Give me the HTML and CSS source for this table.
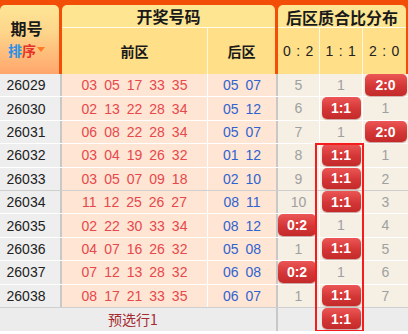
FILE: index.html
```html
<!DOCTYPE html>
<html lang="zh-CN">
<head>
<meta charset="utf-8">
<title>后区质合比分布</title>
<link rel="stylesheet" href="styles.css">
</head>
<body>
<div class="board">
  <div class="head">
    <div class="h-qh">
      <div class="qh-title">期号</div>
      <div class="sort"><span class="pai">排</span><span class="xu">序</span><span class="tri"></span></div>
    </div>
    <div class="h-group h-draw">
      <div class="h-top">开奖号码</div>
      <div class="h-sub">
        <div class="h-front">前区</div>
        <div class="h-back">后区</div>
      </div>
    </div>
    <div class="h-group h-dist">
      <div class="h-top">后区质合比分布</div>
      <div class="h-sub ratio-head">
        <div class="rh">0 : 2</div>
        <div class="rh">1 : 1</div>
        <div class="rh">2 : 0</div>
      </div>
    </div>
  </div>

  <div class="rows">
    <div class="row">
      <div class="c qh">26029</div>
      <div class="c fr"><span>03</span><span>05</span><span>17</span><span>33</span><span>35</span></div>
      <div class="c bk"><span>05</span><span>07</span></div>
      <div class="c r r1">5</div><div class="c r r2">1</div><div class="c r r3"><b class="badge">2:0</b></div>
    </div>
    <div class="row">
      <div class="c qh">26030</div>
      <div class="c fr"><span>02</span><span>13</span><span>22</span><span>28</span><span>34</span></div>
      <div class="c bk"><span>05</span><span>12</span></div>
      <div class="c r r1">6</div><div class="c r r2"><b class="badge">1:1</b></div><div class="c r r3">1</div>
    </div>
    <div class="row">
      <div class="c qh">26031</div>
      <div class="c fr"><span>06</span><span>08</span><span>22</span><span>28</span><span>34</span></div>
      <div class="c bk"><span>05</span><span>07</span></div>
      <div class="c r r1">7</div><div class="c r r2">1</div><div class="c r r3"><b class="badge">2:0</b></div>
    </div>
    <div class="row">
      <div class="c qh">26032</div>
      <div class="c fr"><span>03</span><span>04</span><span>19</span><span>26</span><span>32</span></div>
      <div class="c bk"><span>01</span><span>12</span></div>
      <div class="c r r1">8</div><div class="c r r2"><b class="badge">1:1</b></div><div class="c r r3">1</div>
    </div>
    <div class="row group-end">
      <div class="c qh">26033</div>
      <div class="c fr"><span>03</span><span>05</span><span>07</span><span>09</span><span>18</span></div>
      <div class="c bk"><span>02</span><span>10</span></div>
      <div class="c r r1">9</div><div class="c r r2"><b class="badge">1:1</b></div><div class="c r r3">2</div>
    </div>
    <div class="row">
      <div class="c qh">26034</div>
      <div class="c fr"><span>11</span><span>12</span><span>25</span><span>26</span><span>27</span></div>
      <div class="c bk"><span>08</span><span>11</span></div>
      <div class="c r r1">10</div><div class="c r r2"><b class="badge">1:1</b></div><div class="c r r3">3</div>
    </div>
    <div class="row">
      <div class="c qh">26035</div>
      <div class="c fr"><span>02</span><span>22</span><span>30</span><span>33</span><span>34</span></div>
      <div class="c bk"><span>08</span><span>12</span></div>
      <div class="c r r1"><b class="badge">0:2</b></div><div class="c r r2">1</div><div class="c r r3">4</div>
    </div>
    <div class="row">
      <div class="c qh">26036</div>
      <div class="c fr"><span>04</span><span>07</span><span>16</span><span>26</span><span>32</span></div>
      <div class="c bk"><span>05</span><span>08</span></div>
      <div class="c r r1">1</div><div class="c r r2"><b class="badge">1:1</b></div><div class="c r r3">5</div>
    </div>
    <div class="row">
      <div class="c qh">26037</div>
      <div class="c fr"><span>07</span><span>12</span><span>13</span><span>28</span><span>32</span></div>
      <div class="c bk"><span>06</span><span>08</span></div>
      <div class="c r r1"><b class="badge">0:2</b></div><div class="c r r2">1</div><div class="c r r3">6</div>
    </div>
    <div class="row group-end">
      <div class="c qh">26038</div>
      <div class="c fr"><span>08</span><span>17</span><span>21</span><span>33</span><span>35</span></div>
      <div class="c bk"><span>06</span><span>07</span></div>
      <div class="c r r1">1</div><div class="c r r2"><b class="badge">1:1</b></div><div class="c r r3">7</div>
    </div>
    <div class="row foot">
      <div class="c pick">预选行1</div>
      <div class="c fr-empty r1"></div><div class="c fr-empty r2"><b class="badge">1:1</b></div><div class="c fr-empty r3"></div>
    </div>
  </div>
  <div class="hl"></div>
</div>
</body>
</html>
```

FILE: styles.css
```css
html, body {
  margin: 0;
  padding: 0;
  background: #ffffff;
}
body {
  font-family: "Liberation Sans", Arial, "Noto Sans CJK SC", sans-serif;
}
.board {
  position: relative;
  width: 408px;
}

/* ---------- header ---------- */
.head {
  display: flex;
  height: 74px;
  box-sizing: border-box;
  padding: 5px 2px 0 0;
  background: #f24e08;
  font-family: "Noto Sans CJK SC", sans-serif;
  color: #1a1a1a;
}
.h-qh {
  width: 59px;
  margin-right: 3px;
  border-radius: 5px 5px 0 0;
  background: linear-gradient(#fee697, #fdd58a 40%, #ffa66c);
  display: flex;
  flex-direction: column;
  align-items: center;
  padding-right: 6px;
  box-sizing: border-box;
}
.qh-title {
  margin-top: 14.5px;
  font-size: 16px;
  font-weight: 700;
  line-height: 16px;
}
.sort {
  display: flex;
  align-items: center;
  font-size: 14px;
  font-weight: 700;
  line-height: 14px;
  margin-top: 7px;
}
.pai { color: #2a90e8; }
.xu { color: #e5332a; }
.tri {
  width: 0;
  height: 0;
  margin-left: 1px;
  border-left: 4px solid transparent;
  border-right: 4px solid transparent;
  border-top: 5px solid #ff7a22;
}
.h-group {
  display: flex;
  flex-direction: column;
}
.h-draw {
  width: 213px;
  margin-right: 3px;
}
.h-dist {
  flex: 1;
}
.h-top {
  height: 22px;
  border-radius: 5px 5px 0 0;
  background: #fde592;
  border-bottom: 1px solid #fffbe8;
  display: flex;
  align-items: center;
  justify-content: center;
  font-size: 16px;
  font-weight: 700;
}
.h-dist .h-top {
  height: 23px;
  padding-top: 2px;
  box-sizing: border-box;
}
.h-sub {
  flex: 1;
  display: flex;
  background: #ffe089;
}
.h-front,
.h-back {
  display: flex;
  align-items: center;
  justify-content: center;
  font-size: 14px;
  font-weight: 700;
}
.h-front {
  width: 145px;
  border-right: 1px solid #fff8e0;
}
.h-back {
  flex: 1;
}
.rh {
  display: flex;
  align-items: center;
  justify-content: center;
  font-family: "Liberation Sans", Arial, sans-serif;
  font-size: 14px;
  letter-spacing: 0.8px;
  white-space: nowrap;
  color: #222;
  border-right: 1px solid #fff8e0;
}
.rh:nth-child(1) { width: 41px; }
.rh:nth-child(2) { width: 42px; }
.rh:nth-child(3) { flex: 1; border-right: 0; }

/* ---------- body rows ---------- */
.row {
  display: grid;
  grid-template-columns: 62px 146px 70px 42px 43px 45px;
  height: 23.4px;
  box-sizing: border-box;
  border-bottom: 1px solid #ffffff;
  font-size: 14px;
}
.row.group-end {
  border-bottom-color: #cfcfcf;
}
.c {
  display: flex;
  align-items: center;
  justify-content: center;
  box-sizing: border-box;
  overflow: visible;
}
.qh {
  background: #eeeeee;
  color: #222;
  border-right: 2px solid #c8c8c8;
  padding-right: 8px;
}
.fr {
  background: #ffe5d3;
  color: #e6484c;
  border-right: 1px solid #ffffff;
}
.fr span,
.bk span {
  margin: 0 3.5px;
}
.bk {
  background: #ffe5d3;
  color: #2f63cf;
  border-right: 2px solid #c8c8c8;
}
.r {
  background: #f5efe4;
  color: #a0a0a0;
  align-items: flex-start;
  padding-top: 3px;
}
.r1, .r2 {
  border-right: 1px solid #ffffff;
}
.r1 .badge { margin-right: 3px; }
.r:has(.badge) {
  padding-top: 0;
}

.badge {
  display: flex;
  align-items: center;
  justify-content: center;
  width: calc(100% - 3px);
  height: 21.5px;
  border-radius: 5px;
  background: linear-gradient(#ec5656, #d43636 55%, #c42a2a);
  box-shadow: 0 1px 1px rgba(120, 20, 20, 0.35);
  color: #ffffff;
  font-weight: 700;
  font-size: 14px;
  font-family: "Liberation Sans", Arial, sans-serif;
}

/* ---------- footer ---------- */
.foot {
  height: 23px;
  border-bottom: 0;
}
.pick {
  grid-column: 1 / 4;
  background: #ececec;
  border-right: 2px solid #c8c8c8;
  color: #a52a2e;
  font-family: "Noto Sans CJK SC", sans-serif;
  font-size: 14px;
  padding-right: 10px;
}
.fr-empty {
  background: #ececec;
  align-items: flex-start;
}
.fr-empty.r1 { border-right: 1px solid #ececec; }

/* ---------- highlight overlay ---------- */
.hl {
  position: absolute;
  left: 315px;
  top: 143px;
  width: 49px;
  height: 189px;
  box-sizing: border-box;
  border: 2px solid #f41c1c;
  pointer-events: none;
}
```
